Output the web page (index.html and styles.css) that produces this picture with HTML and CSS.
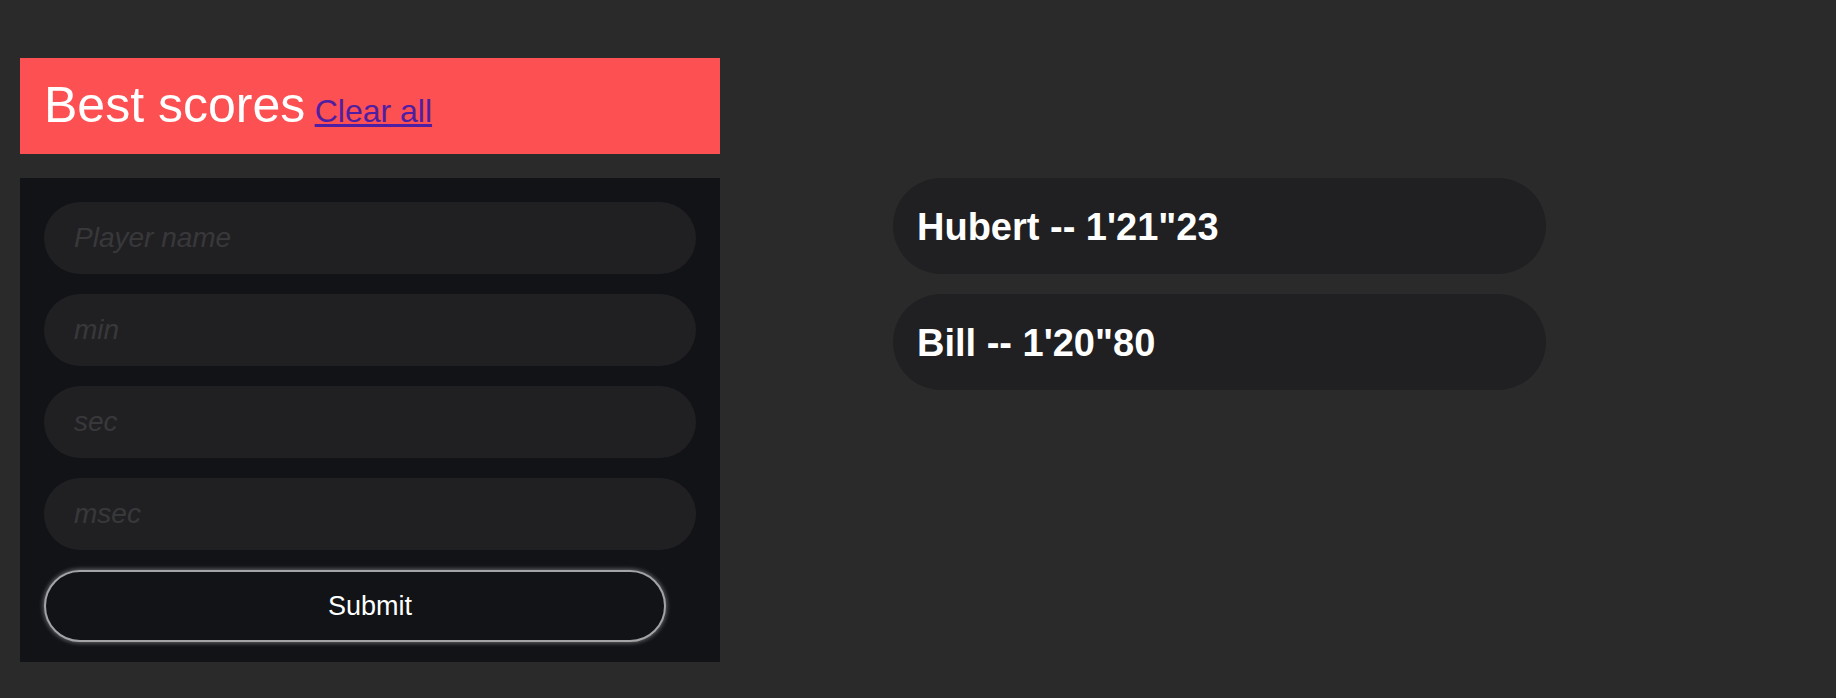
FILE: index.html
```html
<!DOCTYPE html>
<html>
<head>
<meta charset="utf-8">
<link rel="stylesheet" href="styles.css">
</head>
<body>
<div class="layout">
  <header class="head">
    <span class="title">Best scores</span> <a class="clear" href="#">Clear all</a>
  </header>
  <form class="panel">
    <input class="field" type="text" placeholder="Player name">
    <input class="field" type="text" placeholder="min">
    <input class="field" type="text" placeholder="sec">
    <input class="field" type="text" placeholder="msec">
    <button class="submit" type="button">Submit</button>
  </form>
  <ul class="scores">
    <li class="score">Hubert -- 1'21"23</li>
    <li class="score">Bill -- 1'20"80</li>
  </ul>
</div>
</body>
</html>
```

FILE: styles.css
```css
html, body {
  margin: 0;
  background: #2a2a2a;
  font-family: "Liberation Sans", Arial, Helvetica, sans-serif;
}
body {
  padding: 58px 0 0 20px;
}
.layout {
  display: grid;
  grid-template-columns: 700px 653px;
  column-gap: 173px;
  row-gap: 24px;
  align-items: start;
}
.head {
  grid-column: 1;
  grid-row: 1;
  background: #fc5052;
  height: 96px;
  line-height: 94px;
  padding: 0 24px;
  box-sizing: border-box;
  color: #fff;
  white-space: nowrap;
}
.title {
  font-size: 50px;
}
.clear {
  font-size: 32px;
  margin-left: 5px;
  color: #4f1fa3;
  text-decoration: underline;
}
.panel {
  grid-column: 1;
  grid-row: 2;
  margin: 0;
  background: #121317;
  padding: 24px 24px 20px;
  display: flex;
  flex-direction: column;
  gap: 20px;
}
.field {
  height: 72px;
  border: none;
  border-radius: 36px;
  background: #202022;
  padding: 0 30px;
  font-family: inherit;
  font-size: 28px;
  font-style: italic;
  color: #ccc;
  outline: none;
  box-sizing: border-box;
  width: 100%;
}
.field::placeholder {
  color: #38383b;
  font-style: italic;
}
.submit {
  width: 622px;
  height: 72px;
  box-sizing: border-box;
  border: 2px solid #a4a4a6;
  border-radius: 36px;
  background: #121317;
  color: #fff;
  font-family: inherit;
  font-size: 27px;
  padding: 0 0 0 30px;
  box-shadow: 0 0 4px 1px rgba(255, 255, 255, 0.35);
}
.scores {
  grid-column: 2;
  grid-row: 2;
  list-style: none;
  margin: 0;
  padding: 0;
  display: flex;
  flex-direction: column;
  gap: 20px;
}
.score {
  height: 96px;
  box-sizing: border-box;
  padding: 2px 24px 0;
  line-height: 94px;
  border-radius: 48px;
  background: #202022;
  color: #fff;
  font-weight: bold;
  font-size: 38px;
  white-space: nowrap;
}
```
